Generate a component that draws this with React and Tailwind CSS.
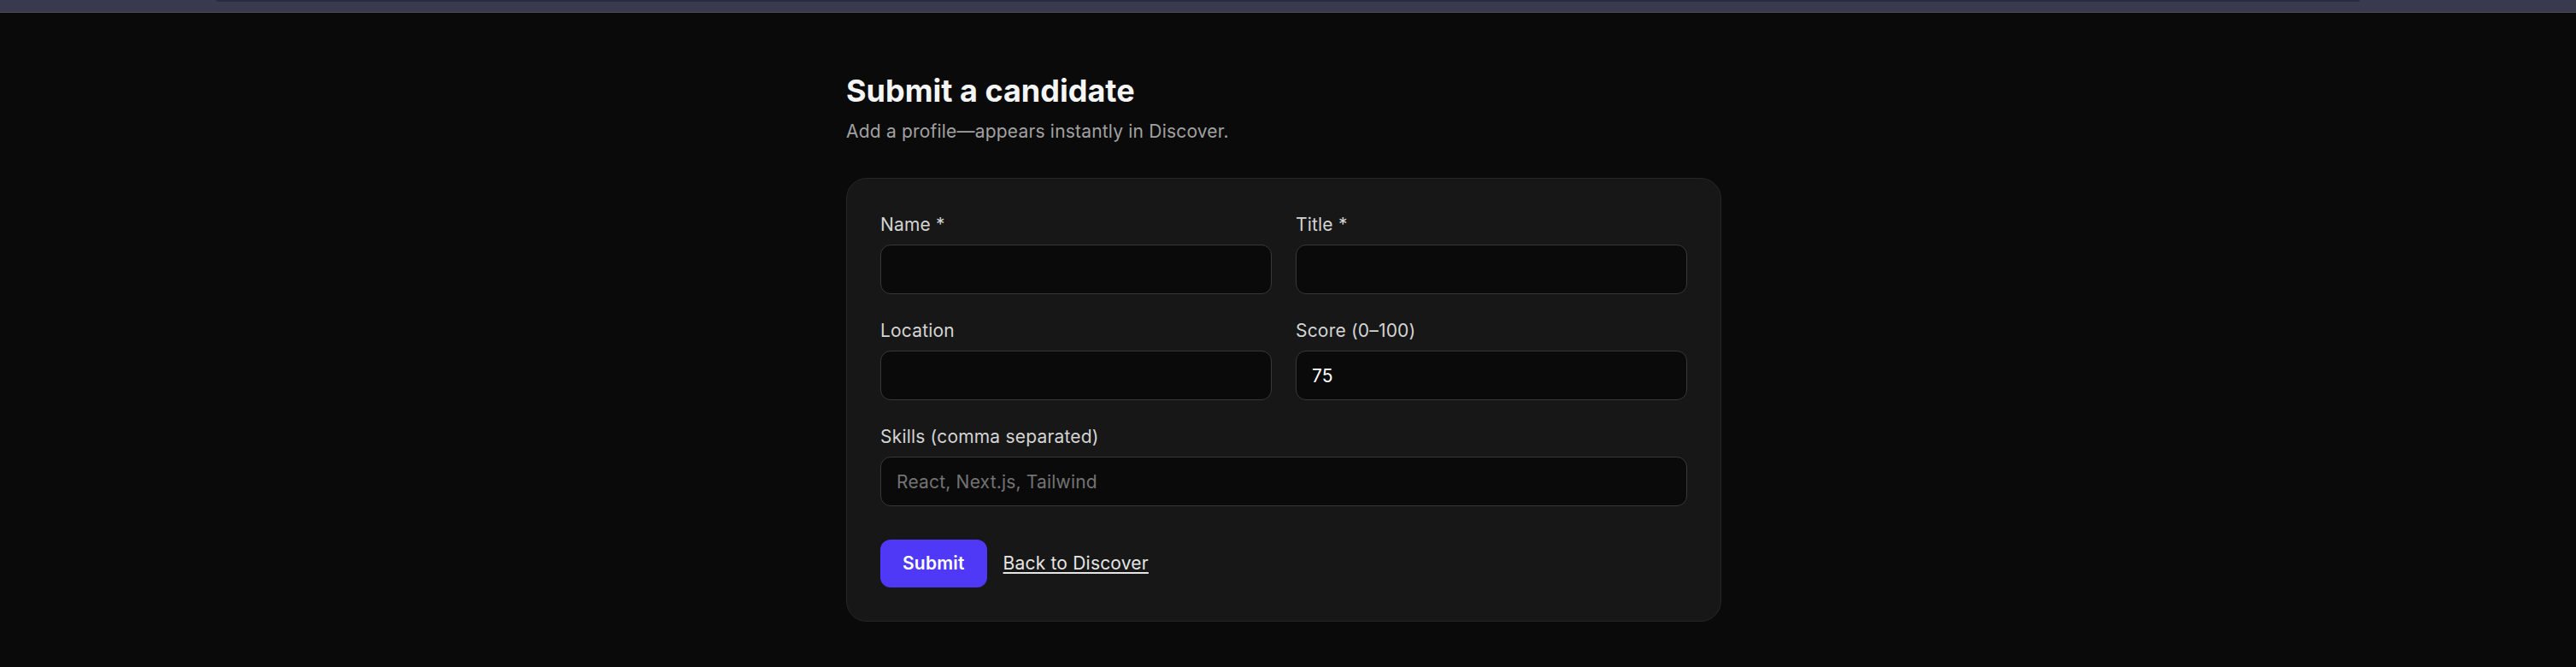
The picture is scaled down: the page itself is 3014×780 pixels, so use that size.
export default function App() {
    return (
        <div className="min-h-screen bg-[#0a0a0a] font-['Inter',sans-serif] text-neutral-100 tracking-[0.012em]">

            {/* top strip */}
            <div className="h-[15px] bg-[#393a4e] border-b border-[#4a4a50]">
                <div className="mx-[253px] h-[2px] rounded-b-full bg-[#2a2b3e]"></div>
            </div>

            <main className="flex justify-center pr-[10px] pt-[71px] pb-10">
                <div className="w-[1024px]">
                    <h1 className="text-[36px] leading-[40px] font-bold tracking-normal text-neutral-100">Submit a candidate</h1>
                    <p className="mt-[13px] text-[21px] leading-[30px] text-neutral-400">Add a profile—appears instantly in Discover.</p>

                    <form className="mt-[39px] rounded-[24px] border border-[#262626] bg-[#171717] p-[39px]" onSubmit={(e) => e.preventDefault()}>
                        <div className="grid grid-cols-2 gap-[28px]">
                            <Field label="Name *" />
                            <Field label="Title *" />
                            <Field label="Location" />
                            <Field label="Score (0–100)" defaultValue="75" />
                            <div className="col-span-2">
                                <Field label="Skills (comma separated)" placeholder="React, Next.js, Tailwind" />
                            </div>
                        </div>

                        <div className="mt-[39px] flex items-center gap-[19px]">
                            <button type="submit" className="h-[56px] rounded-[12px] bg-indigo-600 px-[26px] text-[21px] font-semibold text-white">
                                Submit
                            </button>
                            <a href="#" className="text-[21px] leading-[30px] text-neutral-200 underline underline-offset-[3px]">Back to Discover</a>
                        </div>
                    </form>
                </div>
            </main>
        </div>
    )
}

function Field({ label, defaultValue, placeholder }) {
    return (
        <label className="block">
            <span className="block text-[21px] leading-[30px] text-neutral-300">{label}</span>
            <input
                defaultValue={defaultValue}
                placeholder={placeholder}
                className="mt-[8px] block h-[58px] w-full rounded-[12px] border border-[#383838] bg-[#0a0a0a] px-[18px] text-[21px] text-white placeholder:text-neutral-500 outline-none"
            />
        </label>
    )
}
